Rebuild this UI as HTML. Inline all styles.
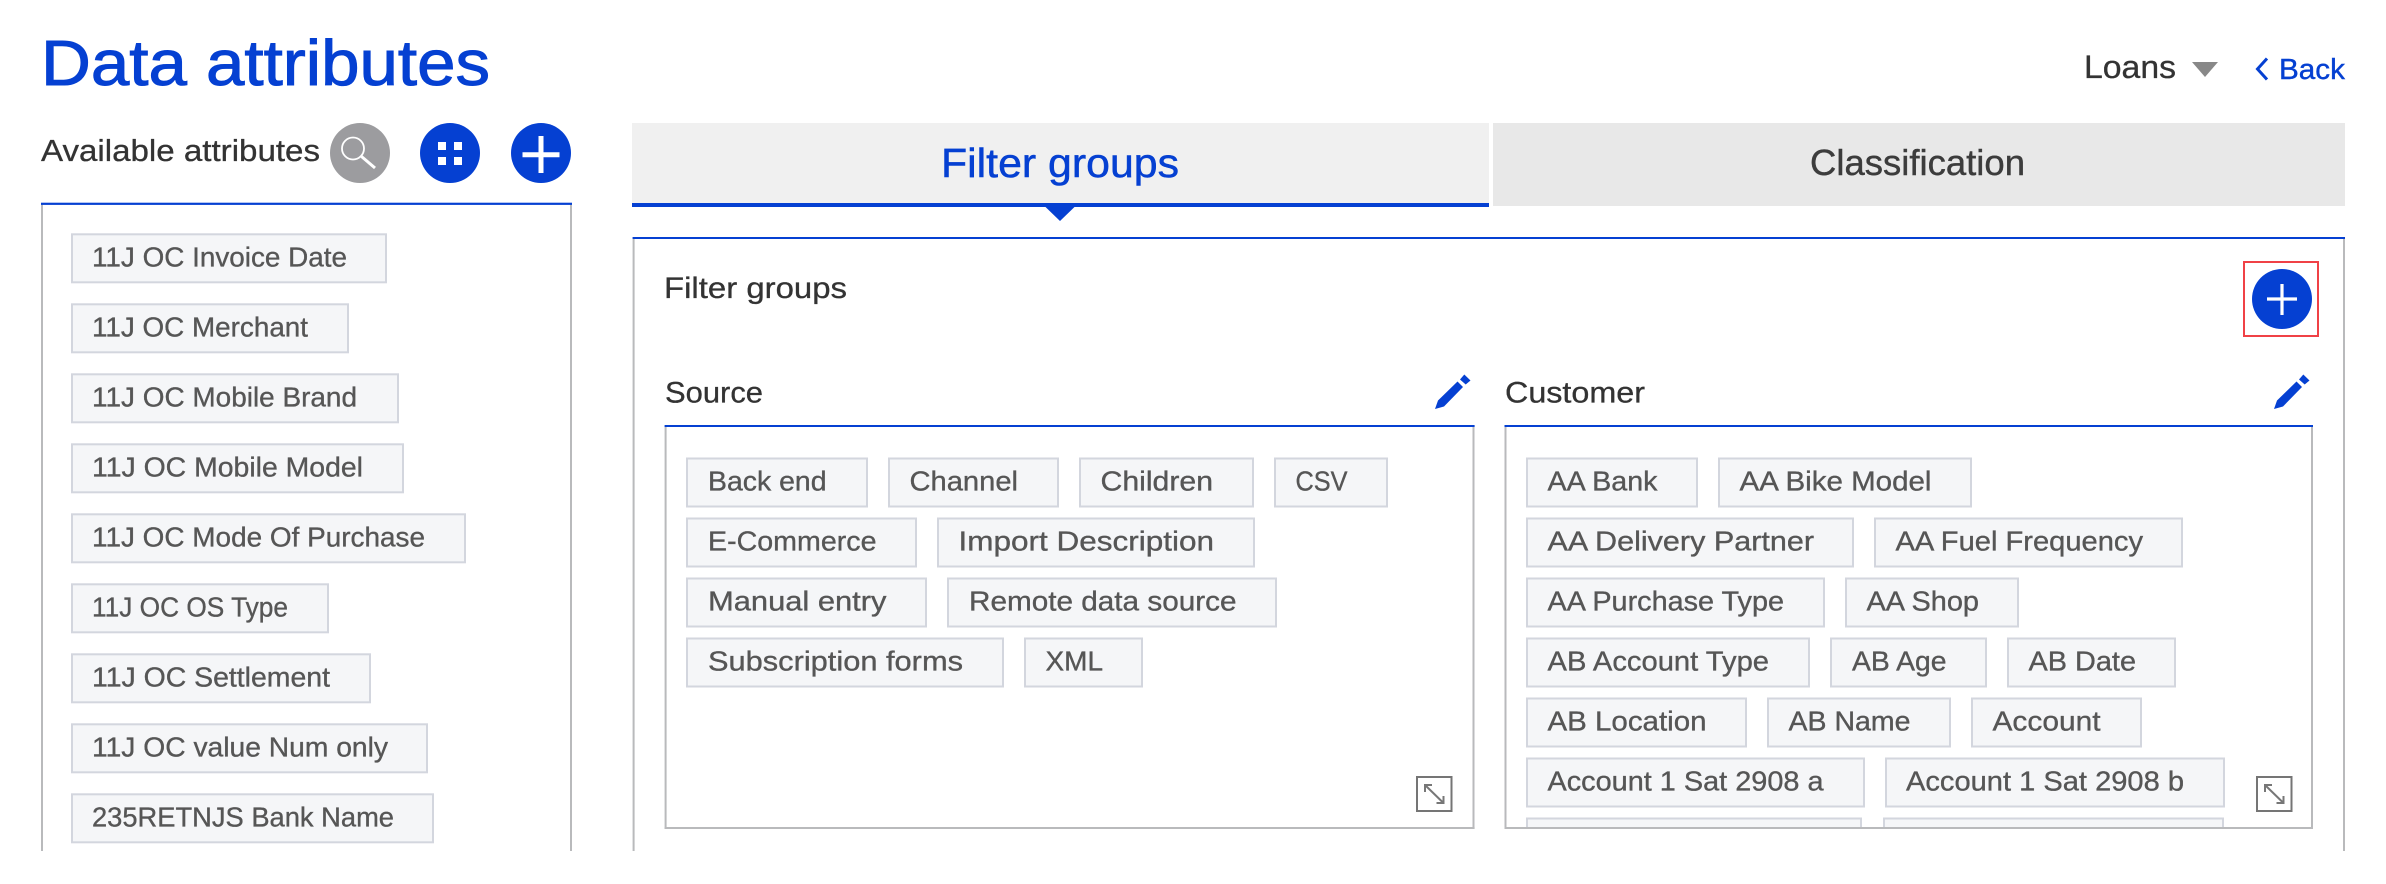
<!DOCTYPE html>
<html lang="en">
<head>
<meta charset="utf-8">
<title>Data attributes</title>
<style>
html,body{margin:0;padding:0;background:#fff;width:2386px;height:884px;overflow:hidden}
svg{display:block}
text{font-family:"Liberation Sans",sans-serif;white-space:pre}
.t{fill:#f5f6f8;stroke:#d3d6de;stroke-width:2}
.x{font-size:28px;fill:#565656;stroke:#565656;stroke-width:.35px}
.h{font-size:30px;fill:#333;stroke:#333;stroke-width:.3px}
.g{fill:#b9babc}
.b{fill:#0540d2}
</style>
</head>
<body>
<svg xmlns="http://www.w3.org/2000/svg" width="2386" height="884" viewBox="0 0 2386 884">
<defs>
<clipPath id="c1"><rect x="1506" y="427" width="806" height="400"/></clipPath>
<g id="pen"><path class="b" d="M2274 409L2277 400.5L2296.5 381.5L2302 387L2283 406.5Z"/><path class="b" d="M2299 379.5L2303.3 374.5L2309.5 380.5L2304.7 384.5Z"/></g>
<g id="rs"><rect x="2257" y="777" width="34.5" height="34" fill="#fff" stroke="#757575" stroke-width="2"/><path d="M2265 785L2283.5 803M2265 792V785H2272M2283.5 796V803H2276.5" fill="none" stroke="#777" stroke-width="2"/></g>
</defs>

<!-- header -->
<text x="41" y="85" font-size="64" fill="#0540d2" stroke="#0540d2" stroke-width="1" textLength="449" lengthAdjust="spacingAndGlyphs">Data attributes</text>
<text x="2084" y="78" font-size="32" fill="#333" stroke="#333" stroke-width=".3" textLength="92" lengthAdjust="spacingAndGlyphs">Loans</text>
<path d="M2192 62H2218L2205 77Z" fill="#888"/>
<path d="M2267 58.5L2257.5 69L2267 79.5" fill="none" stroke="#0540d2" stroke-width="3"/>
<text x="2279" y="79" font-size="29" fill="#0540d2" stroke="#0540d2" stroke-width=".4" textLength="66" lengthAdjust="spacingAndGlyphs">Back</text>

<!-- available attributes -->
<text x="41" y="161" font-size="31" fill="#333" stroke="#333" stroke-width=".3" textLength="279" lengthAdjust="spacingAndGlyphs">Available attributes</text>
<circle cx="360" cy="153" r="30" fill="#9c9c9f"/>
<circle cx="353" cy="148.5" r="11" fill="none" stroke="#fff" stroke-width="1.8"/>
<path d="M361.5 156.5L375 168" fill="none" stroke="#fff" stroke-width="3"/>
<circle cx="450" cy="153" r="30" class="b"/>
<path d="M438 142h8v8h-8zM454 142h8v8h-8zM438 157h8v8h-8zM454 157h8v8h-8z" fill="#fff"/>
<circle cx="541" cy="153" r="30" class="b"/>
<path d="M522.5 152.3h37v5h-37zM538.5 136h5v37h-5z" fill="#fff"/>

<!-- left list -->
<rect class="g" x="41" y="203" width="2" height="648"/>
<rect class="g" x="570" y="203" width="2" height="648"/>
<rect class="b" x="41" y="202.7" width="531" height="2.2"/>

<rect class="t" x="72" y="234.3" width="314" height="48"/><text class="x" x="92" y="266.7" textLength="255" lengthAdjust="spacingAndGlyphs">11J OC Invoice Date</text>
<rect class="t" x="72" y="304.3" width="276" height="48"/><text class="x" x="92" y="336.7" textLength="216" lengthAdjust="spacingAndGlyphs">11J OC Merchant</text>
<rect class="t" x="72" y="374.3" width="326" height="48"/><text class="x" x="92" y="406.7" textLength="265" lengthAdjust="spacingAndGlyphs">11J OC Mobile Brand</text>
<rect class="t" x="72" y="444.3" width="331" height="48"/><text class="x" x="92" y="476.7" textLength="271" lengthAdjust="spacingAndGlyphs">11J OC Mobile Model</text>
<rect class="t" x="72" y="514.3" width="393" height="48"/><text class="x" x="92" y="546.7" textLength="333" lengthAdjust="spacingAndGlyphs">11J OC Mode Of Purchase</text>
<rect class="t" x="72" y="584.3" width="256" height="48"/><text class="x" x="92" y="616.7" textLength="196" lengthAdjust="spacingAndGlyphs">11J OC OS Type</text>
<rect class="t" x="72" y="654.3" width="298" height="48"/><text class="x" x="92" y="686.7" textLength="238" lengthAdjust="spacingAndGlyphs">11J OC Settlement</text>
<rect class="t" x="72" y="724.3" width="355" height="48"/><text class="x" x="92" y="756.7" textLength="296" lengthAdjust="spacingAndGlyphs">11J OC value Num only</text>
<rect class="t" x="72" y="794.3" width="361" height="48"/><text class="x" x="92" y="826.7" textLength="302" lengthAdjust="spacingAndGlyphs">235RETNJS Bank Name</text>

<!-- tabs -->
<rect x="632" y="123" width="857" height="80" fill="#f0f0f0"/>
<rect class="b" x="632" y="203" width="857" height="4"/>
<path class="b" d="M1045.5 207H1074.5L1060 221Z"/>
<text x="941" y="177" font-size="41" fill="#0540d2" stroke="#0540d2" stroke-width=".5" textLength="238" lengthAdjust="spacingAndGlyphs">Filter groups</text>
<rect x="1493" y="123" width="852" height="83" fill="#e8e8e8"/>
<text x="1810" y="175" font-size="36" fill="#3c3c3c" stroke="#3c3c3c" stroke-width=".4" textLength="215" lengthAdjust="spacingAndGlyphs">Classification</text>

<!-- main panel -->
<rect class="g" x="632.6" y="237" width="2" height="614"/>
<rect class="g" x="2343" y="237" width="2" height="614"/>
<rect class="b" x="632.6" y="237" width="1712.4" height="2"/>
<text class="h" x="664" y="298" textLength="183" lengthAdjust="spacingAndGlyphs">Filter groups</text>

<rect x="2244" y="262" width="74" height="74" fill="none" stroke="#f04146" stroke-width="2"/>
<circle cx="2282" cy="299" r="30" class="b"/>
<path d="M2267 297.4h30v3.2h-30zM2280.4 284h3.2v31h-3.2z" fill="#fff"/>

<!-- source -->
<text class="h" x="665" y="402.7" textLength="98" lengthAdjust="spacingAndGlyphs">Source</text>
<use href="#pen" transform="translate(-839 0)"/>
<rect class="g" x="664.6" y="426" width="2" height="403"/>
<rect class="g" x="1472.5" y="426" width="2" height="403"/>
<rect class="g" x="664.6" y="827" width="810" height="2"/>
<rect class="b" x="664.6" y="425" width="810" height="2"/>

<rect class="t" x="687" y="458.5" width="180" height="48"/><text class="x" x="708" y="490.7" textLength="118.5" lengthAdjust="spacingAndGlyphs">Back end</text>
<rect class="t" x="889" y="458.5" width="169" height="48"/><text class="x" x="909.5" y="490.7" textLength="108.5" lengthAdjust="spacingAndGlyphs">Channel</text>
<rect class="t" x="1080" y="458.5" width="173" height="48"/><text class="x" x="1100.5" y="490.7" textLength="112.5" lengthAdjust="spacingAndGlyphs">Children</text>
<rect class="t" x="1275" y="458.5" width="112" height="48"/><text class="x" x="1295.5" y="490.7" textLength="52" lengthAdjust="spacingAndGlyphs">CSV</text>

<rect class="t" x="687" y="518.5" width="229" height="48"/><text class="x" x="708" y="550.7" textLength="168.5" lengthAdjust="spacingAndGlyphs">E-Commerce</text>
<rect class="t" x="938" y="518.5" width="316" height="48"/><text class="x" x="958.5" y="550.7" textLength="255.5" lengthAdjust="spacingAndGlyphs">Import Description</text>

<rect class="t" x="687" y="578.5" width="239" height="48"/><text class="x" x="708" y="610.7" textLength="178.5" lengthAdjust="spacingAndGlyphs">Manual entry</text>
<rect class="t" x="948" y="578.5" width="328" height="48"/><text class="x" x="969" y="610.7" textLength="267.5" lengthAdjust="spacingAndGlyphs">Remote data source</text>

<rect class="t" x="687" y="638.5" width="316" height="48"/><text class="x" x="708" y="670.7" textLength="255" lengthAdjust="spacingAndGlyphs">Subscription forms</text>
<rect class="t" x="1025" y="638.5" width="117" height="48"/><text class="x" x="1045.5" y="670.7" textLength="57.5" lengthAdjust="spacingAndGlyphs">XML</text>

<use href="#rs" transform="translate(-840 0)"/>

<!-- customer -->
<text class="h" x="1505" y="402.7" textLength="140" lengthAdjust="spacingAndGlyphs">Customer</text>
<use href="#pen"/>
<rect class="g" x="1504.5" y="426" width="2" height="403"/>
<rect class="g" x="2311" y="426" width="2" height="403"/>
<rect class="b" x="1504.5" y="425" width="808.5" height="2"/>

<g clip-path="url(#c1)">
<rect class="t" x="1527" y="458.5" width="170" height="48"/><text class="x" x="1547.5" y="490.7" textLength="110" lengthAdjust="spacingAndGlyphs">AA Bank</text>
<rect class="t" x="1719" y="458.5" width="252" height="48"/><text class="x" x="1739.5" y="490.7" textLength="192" lengthAdjust="spacingAndGlyphs">AA Bike Model</text>

<rect class="t" x="1527" y="518.5" width="326" height="48"/><text class="x" x="1547.5" y="550.7" textLength="266.5" lengthAdjust="spacingAndGlyphs">AA Delivery Partner</text>
<rect class="t" x="1875" y="518.5" width="307" height="48"/><text class="x" x="1895.5" y="550.7" textLength="247.5" lengthAdjust="spacingAndGlyphs">AA Fuel Frequency</text>

<rect class="t" x="1527" y="578.5" width="297" height="48"/><text class="x" x="1547.5" y="610.7" textLength="236.5" lengthAdjust="spacingAndGlyphs">AA Purchase Type</text>
<rect class="t" x="1846" y="578.5" width="172" height="48"/><text class="x" x="1866.5" y="610.7" textLength="112.5" lengthAdjust="spacingAndGlyphs">AA Shop</text>

<rect class="t" x="1527" y="638.5" width="282" height="48"/><text class="x" x="1547.5" y="670.7" textLength="221.5" lengthAdjust="spacingAndGlyphs">AB Account Type</text>
<rect class="t" x="1831" y="638.5" width="155" height="48"/><text class="x" x="1852" y="670.7" textLength="94.5" lengthAdjust="spacingAndGlyphs">AB Age</text>
<rect class="t" x="2008" y="638.5" width="167" height="48"/><text class="x" x="2028.5" y="670.7" textLength="107.5" lengthAdjust="spacingAndGlyphs">AB Date</text>

<rect class="t" x="1527" y="698.5" width="219" height="48"/><text class="x" x="1547.5" y="730.7" textLength="159" lengthAdjust="spacingAndGlyphs">AB Location</text>
<rect class="t" x="1768" y="698.5" width="182" height="48"/><text class="x" x="1788.5" y="730.7" textLength="122" lengthAdjust="spacingAndGlyphs">AB Name</text>
<rect class="t" x="1972" y="698.5" width="169" height="48"/><text class="x" x="1992.5" y="730.7" textLength="108" lengthAdjust="spacingAndGlyphs">Account</text>

<rect class="t" x="1527" y="758.5" width="337" height="48"/><text class="x" x="1547.5" y="790.7" textLength="276" lengthAdjust="spacingAndGlyphs">Account 1 Sat 2908 a</text>
<rect class="t" x="1886" y="758.5" width="338" height="48"/><text class="x" x="1906" y="790.7" textLength="278" lengthAdjust="spacingAndGlyphs">Account 1 Sat 2908 b</text>

<rect class="t" x="1527" y="818.5" width="334" height="48"/>
<rect class="t" x="1884" y="818.5" width="339" height="48"/>
</g>
<rect class="g" x="1504.5" y="827" width="808.5" height="2"/>

<use href="#rs"/>
</svg>
</body>
</html>
